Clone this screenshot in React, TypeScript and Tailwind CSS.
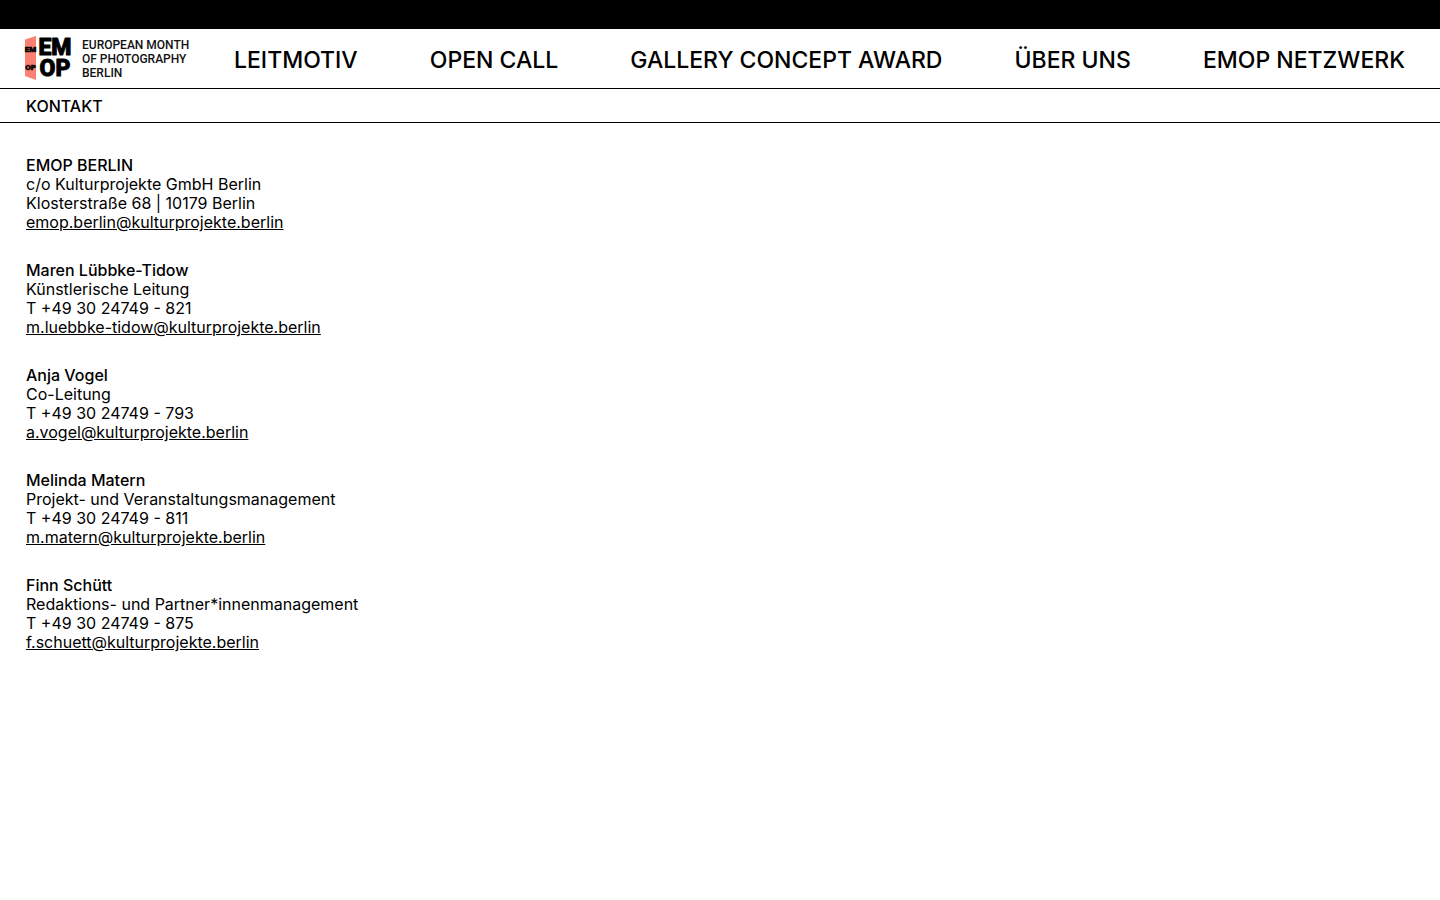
const navItems = ['LEITMOTIV', 'OPEN CALL', 'GALLERY CONCEPT AWARD', 'ÜBER UNS', 'EMOP NETZWERK'];

const contacts = [
  {
    name: 'EMOP BERLIN',
    lines: ['c/o Kulturprojekte GmbH Berlin', 'Klosterstraße 68 | 10179 Berlin'],
    email: 'emop.berlin@kulturprojekte.berlin',
  },
  {
    name: 'Maren Lübbke-Tidow',
    lines: ['Künstlerische Leitung', 'T +49 30 24749 - 821'],
    email: 'm.luebbke-tidow@kulturprojekte.berlin',
  },
  {
    name: 'Anja Vogel',
    lines: ['Co-Leitung', 'T +49 30 24749 - 793'],
    email: 'a.vogel@kulturprojekte.berlin',
  },
  {
    name: 'Melinda Matern',
    lines: ['Projekt- und Veranstaltungsmanagement', 'T +49 30 24749 - 811'],
    email: 'm.matern@kulturprojekte.berlin',
  },
  {
    name: 'Finn Schütt',
    lines: ['Redaktions- und Partner*innenmanagement', 'T +49 30 24749 - 875'],
    email: 'f.schuett@kulturprojekte.berlin',
  },
];

function Logo() {
  return (
    <svg
      width="168"
      height="46"
      viewBox="0 0 168 46"
      role="img"
      aria-label="European Month of Photography Berlin"
      className="shrink-0"
    >
      <path d="M1 3.5 L12 0 V44 L1 40 Z" fill="#fa8072" />
      <g
        fontFamily='"Liberation Sans Narrow", "Roboto", sans-serif'
        fontWeight="900"
        fontSize="8"
        stroke="#000"
        strokeWidth="0.5"
        textAnchor="middle"
      >
        <text x="6.5" y="16">EM</text>
        <text x="6.5" y="34">OP</text>
      </g>
      <g
        fontFamily='"Roboto", "Liberation Sans", sans-serif'
        fontWeight="800"
        fontSize="23"
        stroke="#000"
        strokeWidth="1"
        strokeLinejoin="round"
        textAnchor="middle"
      >
        <text x="31" y="19">EM</text>
        <text x="31" y="40">OP</text>
      </g>
      <g fontFamily='Roboto, "Liberation Sans", sans-serif' fontWeight="500" fontSize="12" fill="#111">
        <text x="58" y="13">EUROPEAN MONTH</text>
        <text x="58" y="27">OF PHOTOGRAPHY</text>
        <text x="58" y="41">BERLIN</text>
      </g>
    </svg>
  );
}

export default function App() {
  return (
    <div className="min-h-screen bg-white font-['Inter','Liberation_Sans',sans-serif] text-base text-black">
      <div className="h-[29px] bg-black" />
      <header className="flex h-[60px] items-center border-b border-black pr-[35px] pl-6">
        <a href="#start">
          <Logo />
        </a>
        <nav className="ml-[42px] flex flex-1 items-center justify-between pt-1 text-[23px] font-medium whitespace-nowrap">
          {navItems.map((item) => (
            <a key={item} href="#menu">
              {item}
            </a>
          ))}
        </nav>
      </header>
      <div className="flex h-[34px] items-center border-b border-black px-[26px]">
        <h1 className="font-medium">KONTAKT</h1>
      </div>
      <main className="flex flex-col gap-[29px] px-[26px] pt-[33px] pb-8 leading-[19px]">
        {contacts.map((contact) => (
          <section key={contact.email}>
            <h2 className="font-medium">{contact.name}</h2>
            {contact.lines.map((line) => (
              <p key={line}>{line}</p>
            ))}
            <a href={`mailto:${contact.email}`} className="block w-fit underline">
              {contact.email}
            </a>
          </section>
        ))}
      </main>
    </div>
  );
}
